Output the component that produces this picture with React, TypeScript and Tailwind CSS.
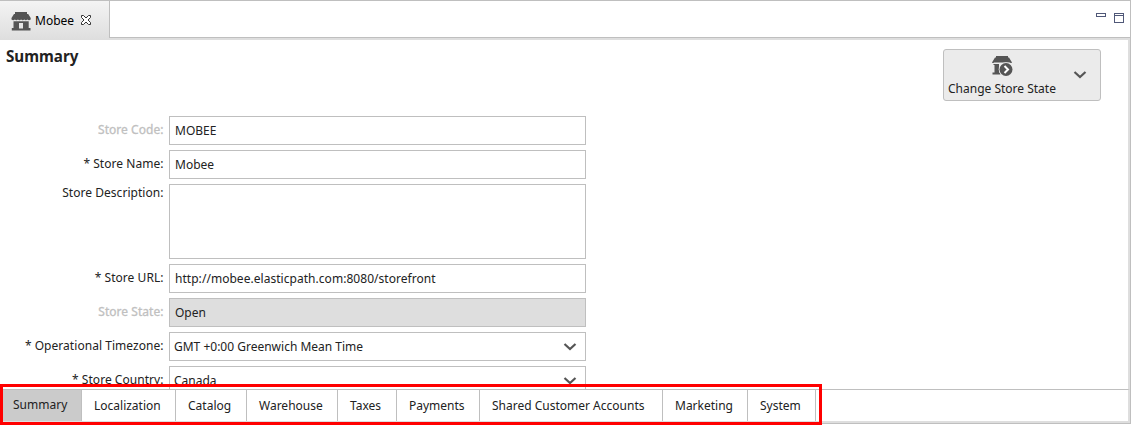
import type { ReactNode } from "react";

function StoreIcon() {
  return (
    <svg width="20" height="20" viewBox="0 0 20 20" fill="#555" className="mt-px shrink-0">
      <path d="M4 1h12v2h1.200L19.700 7v1.500q-1.700 1.500-3.400 0-1.500 1.500-3 0-1.600 1.500-3.200 0-1.600 1.500-3.200 0-1.500 1.500-3 0-1.700 1.500-3.400 0V7L3 3h1z" />
      <path fillRule="evenodd" d="M2.500 10.300h15.200V17h1.800v2.500H.8V17h1.700zM8 12v5.500h4V12z" />
    </svg>
  );
}

function StateIcon() {
  return (
    <svg width="22" height="20" viewBox="0 0 22 20" fill="#555">
      <path d="M4 0h12v1.500h1L20 6.500q-1 1-2 0H2q-1 1-2 0L3 1.500h1z" />
      <path d="M1.500 8h5.500v8.500h1.500V18.500H.500V16.500h2V9h-1z" />
      <circle cx="14" cy="13.500" r="7.300" fill="#ebebeb" />
      <circle cx="14" cy="13.500" r="6.500" />
      <path d="m12.500 10 3.500 3.500-3.500 3.500" fill="none" stroke="#fff" strokeWidth="2" />
    </svg>
  );
}

function Chevron() {
  return (
    <svg width="14" height="8" viewBox="0 0 14 8" fill="none" stroke="#555" strokeWidth="2.2" className="shrink-0">
      <path d="m1.500 1 5.500 5 5.500-5" />
    </svg>
  );
}

function Row({ label, muted, children, tall }: { label: string; muted?: boolean; tall?: boolean; children?: ReactNode }) {
  return (
    <div className={tall ? "flex h-[75px]" : "flex h-[29px]"}>
      <div
        className={`w-[169px] whitespace-nowrap pr-[5.5px] text-right tracking-[0.04px] ${tall ? "leading-[17px]" : "leading-[27px]"} ${muted ? "text-[#c0c0c0] [-webkit-text-stroke:0.3px_#c0c0c0]" : ""}`}
      >
        {label}
      </div>
      <div
        className={`flex w-[417px] items-center border border-[#bfbfbf] pl-[5px] ${label === "Store State:" ? "bg-[#dedede]" : ""}`}
      >
        {children}
      </div>
    </div>
  );
}

function Choice({ value }: { value: string }) {
  return (
    <div className="-ml-px flex flex-1 items-center justify-between pr-[8px]">
      {value}
      <Chevron />
    </div>
  );
}

const tabs = [
  { name: "Localization", cls: "w-[94px]" },
  { name: "Catalog", cls: "w-[71px]" },
  { name: "Warehouse", cls: "w-[91px]" },
  { name: "Taxes", cls: "w-[59px]" },
  { name: "Payments", cls: "w-[83px]" },
  { name: "Shared Customer Accounts", cls: "w-[183px]" },
  { name: "Marketing", cls: "w-[85px]" },
  { name: "System", cls: "w-[68px]" },
];

export default function App() {
  return (
    <div className="h-[426px] w-[1131px] overflow-hidden bg-white font-['Noto_Sans','Open_Sans',sans-serif] text-[12px] text-[#222]">
      <div className="relative flex h-[424px] flex-col border-t border-r border-b border-[#bfbfbf]">
        <header className="flex h-[39px] shrink-0">
          <div className="flex w-[109px] items-center bg-linear-to-b from-[#f4f4f4] to-[#dedede] pl-[11px] text-black">
            <StoreIcon />
            <span className="ml-1">Mobee</span>
            <svg width="12" height="12" viewBox="0 0 12 12" fill="white" stroke="#333" className="-mt-px ml-[6px]">
              <path d="M1.500 1.500h2L6 4l2.500-2.500h2v2L8 6l2.500 2.500v2h-2L6 8l-2.500 2.500h-2v-2L4 6 1.500 3.500z" />
            </svg>
          </div>
          <div className="flex flex-1 flex-col">
            <div className="flex h-[37px] justify-end border-b border-l border-[#bfbfbf] pt-3 pr-[6px]">
              <svg width="28" height="11" viewBox="0 0 28 11" fill="none" stroke="#505878" shapeRendering="crispEdges">
                <path d="M.5.5h9v3h-9zM18.500.5h9v9h-9zM18.500 2.500h9" />
              </svg>
            </div>
            <div className="h-[2px] bg-[#dedede]" />
          </div>
        </header>
        <main className="flex h-[349px] shrink-0 justify-between overflow-hidden border-r-2 border-[#dedede]">
          <section>
            <h1 className="h-[76px] pt-[6px] pl-[6px] text-[15.2px] leading-[21px] font-bold">Summary</h1>
            <div className="flex flex-col gap-[5px]">
              <Row label="Store Code:" muted>MOBEE</Row>
              <Row label="* Store Name:">Mobee</Row>
              <Row label="Store Description:" tall />
              <Row label="* Store URL:"><span className="tracking-[0.04px]">http://mobee.elasticpath.com:8080/storefront</span></Row>
              <Row label="Store State:" muted>Open</Row>
              <Row label="* Operational Timezone:"><Choice value="GMT +0:00 Greenwich Mean Time" /></Row>
              <Row label="* Store Country:"><Choice value="Canada" /></Row>
            </div>
          </section>
          <button className="mt-[9px] mr-[27px] flex h-[52px] w-[158px] items-center rounded-[3px] border border-[#bfbfbf] bg-[#ebebeb] pl-[4px]">
            <span className="flex flex-col items-center whitespace-nowrap pt-[3px]">
              <span className="pl-[2px]"><StateIcon /></span>
              <span className="mt-[3px] leading-[19px]">Change Store State</span>
            </span>
            <span className="ml-[17px]"><Chevron /></span>
          </button>
        </main>
        <nav className="flex h-[32px] shrink-0 border-t border-r-2 border-[#dedede] border-t-[#bfbfbf] pl-[3px]">
          <div className="w-[79px] border-r border-[#bfbfbf] bg-[#cbcbcb] pl-[10px] leading-[29px]">Summary</div>
          {tabs.map((t) => (
            <div key={t.name} className={`${t.cls} border-r border-[#bfbfbf] pl-3 leading-[31px] whitespace-nowrap`}>{t.name}</div>
          ))}
        </nav>
        <div className="h-[2px] shrink-0 bg-[#dedede]" />
        <div className="absolute top-[383px] left-0 h-[41px] w-[822px] border-3 border-[#ff0000]" />
      </div>
    </div>
  );
}
